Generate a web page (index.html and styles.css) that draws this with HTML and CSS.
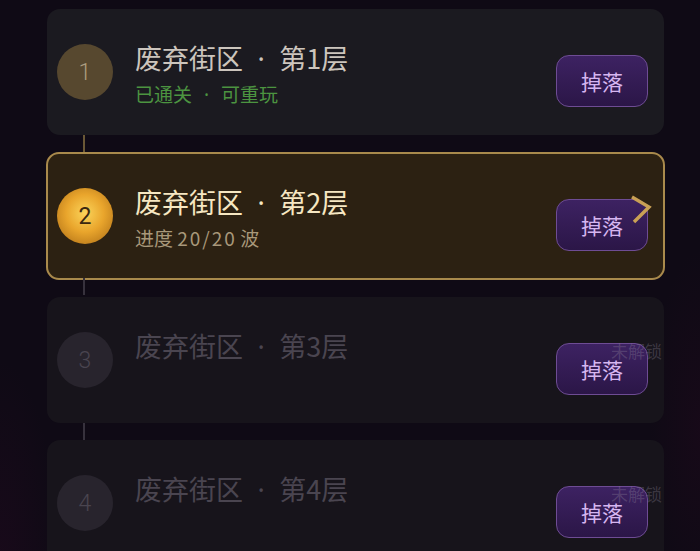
FILE: index.html
```html
<!DOCTYPE html>
<html lang="zh-CN">
<head>
<meta charset="utf-8">
<link rel="stylesheet" href="styles.css">
</head>
<body>
<div class="list">
  <div class="card card--cleared link-gold">
    <div class="badge badge--cleared">1</div>
    <div class="info">
      <div class="title">废弃街区<span class="dot">·</span>第1层</div>
      <div class="sub sub--green">已通关<span class="dot">·</span>可重玩</div>
    </div>
    <div class="side">
      <button class="drop">掉落</button>
    </div>
  </div>
  <div class="card card--active link-grey">
    <div class="badge badge--active">2</div>
    <div class="info">
      <div class="title">废弃街区<span class="dot">·</span>第2层</div>
      <div class="sub sub--gold">进度 <span class="num">20/20</span> 波</div>
    </div>
    <div class="side">
      <button class="drop">掉落</button>
    </div>
    <svg class="chev" width="24" height="30" viewBox="0 0 24 30"><path d="M3 2 L20 12 L5 27" fill="none" stroke="#c9a055" stroke-width="3.4" stroke-linejoin="miter"/></svg>
  </div>
  <div class="card card--locked link-grey">
    <div class="badge badge--locked">3</div>
    <div class="info">
      <div class="title">废弃街区<span class="dot">·</span>第3层</div>
      <div class="sub"></div>
    </div>
    <div class="side">
      <button class="drop">掉落</button>
    </div>
    <span class="lock">未解锁</span>
  </div>
  <div class="card card--locked">
    <div class="badge badge--locked">4</div>
    <div class="info">
      <div class="title">废弃街区<span class="dot">·</span>第4层</div>
      <div class="sub"></div>
    </div>
    <div class="side">
      <button class="drop">掉落</button>
    </div>
    <span class="lock">未解锁</span>
  </div>
</div>
</body>
</html>
```
FILE: styles.css
```css
html, body {
  margin: 0;
  padding: 0;
  height: 100%;
}
body {
  background:
    radial-gradient(ellipse 60px 220px at 0 580px, rgba(60, 8, 45, 0.22), transparent),
    radial-gradient(ellipse 50px 180px at 700px 430px, rgba(55, 8, 38, 0.2), transparent),
    #0f0a15;
  font-family: "Noto Sans CJK SC", "Noto Sans", sans-serif;
  overflow: hidden;
}
.list {
  display: flex;
  flex-direction: column;
  gap: 17px;
  padding: 9px 36px 0 47px;
}
.card {
  position: relative;
  box-sizing: border-box;
  height: 126px;
  border-radius: 13px;
  display: flex;
  align-items: center;
  padding: 4px 16px 0 10px;
}
.card::after {
  content: "";
  position: absolute;
  left: 36px;
  top: 100%;
  width: 2px;
  height: 17px;
}
.link-gold::after { background: #6a5836; }
.link-grey::after { background: #37323d; }
.card--cleared {
  background: #1b1a20;
}
.card--active {
  background: #2c2112;
  border: 2px solid #a98a4c;
  height: 128px;
  margin: 0 -1px;
  padding: 4px 15px 0 9px;
}
.card--active::after { left: 35px; }
.card--locked {
  background: #17141b;
}
.badge {
  width: 56px;
  height: 56px;
  border-radius: 50%;
  flex: none;
  display: flex;
  align-items: center;
  justify-content: center;
  font-family: Roboto, "Noto Sans", sans-serif;
  font-weight: 300;
  font-size: 23px;
  margin-top: -4px;
}
.badge--cleared {
  background: #57482f;
  color: #ab9d80;
}
.badge--active {
  background: radial-gradient(circle at 50% 45%, #fbd45a 0%, #e9a52c 45%, #b8781a 85%, #9a6212 100%);
  color: #3a2710;
  font-weight: 400;
}
.badge--locked {
  background: #28242d;
  color: #4a4550;
}
.info {
  flex: 1;
  margin-left: 22px;
  display: flex;
  flex-direction: column;
}
.title {
  font-size: 27px;
  line-height: 34px;
  color: #ccc5bd;
}
.title .dot {
  font-family: "Noto Sans", sans-serif;
  margin: 0 14.5px;
}
.card--active .title { color: #f6e7c2; }
.card--locked .title { color: #4a4550; }
.sub {
  font-size: 19px;
  line-height: 26px;
  height: 26px;
  margin-top: 5px;
}
.sub .dot {
  font-family: "Noto Sans", sans-serif;
  margin: 0 12px;
}
.sub .num {
  letter-spacing: 2px;
  margin-right: -1px;
}
.sub--green { color: #4c9440; }
.sub--gold { color: #a8987a; }
.side {
  flex: none;
  display: flex;
  flex-direction: column;
  margin-top: 14px;
}
.drop {
  box-sizing: border-box;
  width: 92px;
  height: 52px;
  border-radius: 13px;
  border: 1.5px solid #6e4c94;
  background: linear-gradient(180deg, #3d2262 0%, #2b1647 100%);
  color: #d6b6f0;
  font-family: "Noto Sans CJK SC", sans-serif;
  font-size: 21px;
  padding: 0;
}
.lock {
  position: absolute;
  right: 2px;
  top: 43px;
  font-size: 17px;
  line-height: 22px;
  color: rgba(150, 140, 160, 0.3);
}
.chev {
  position: absolute;
  right: 10px;
  top: 41px;
}
```
